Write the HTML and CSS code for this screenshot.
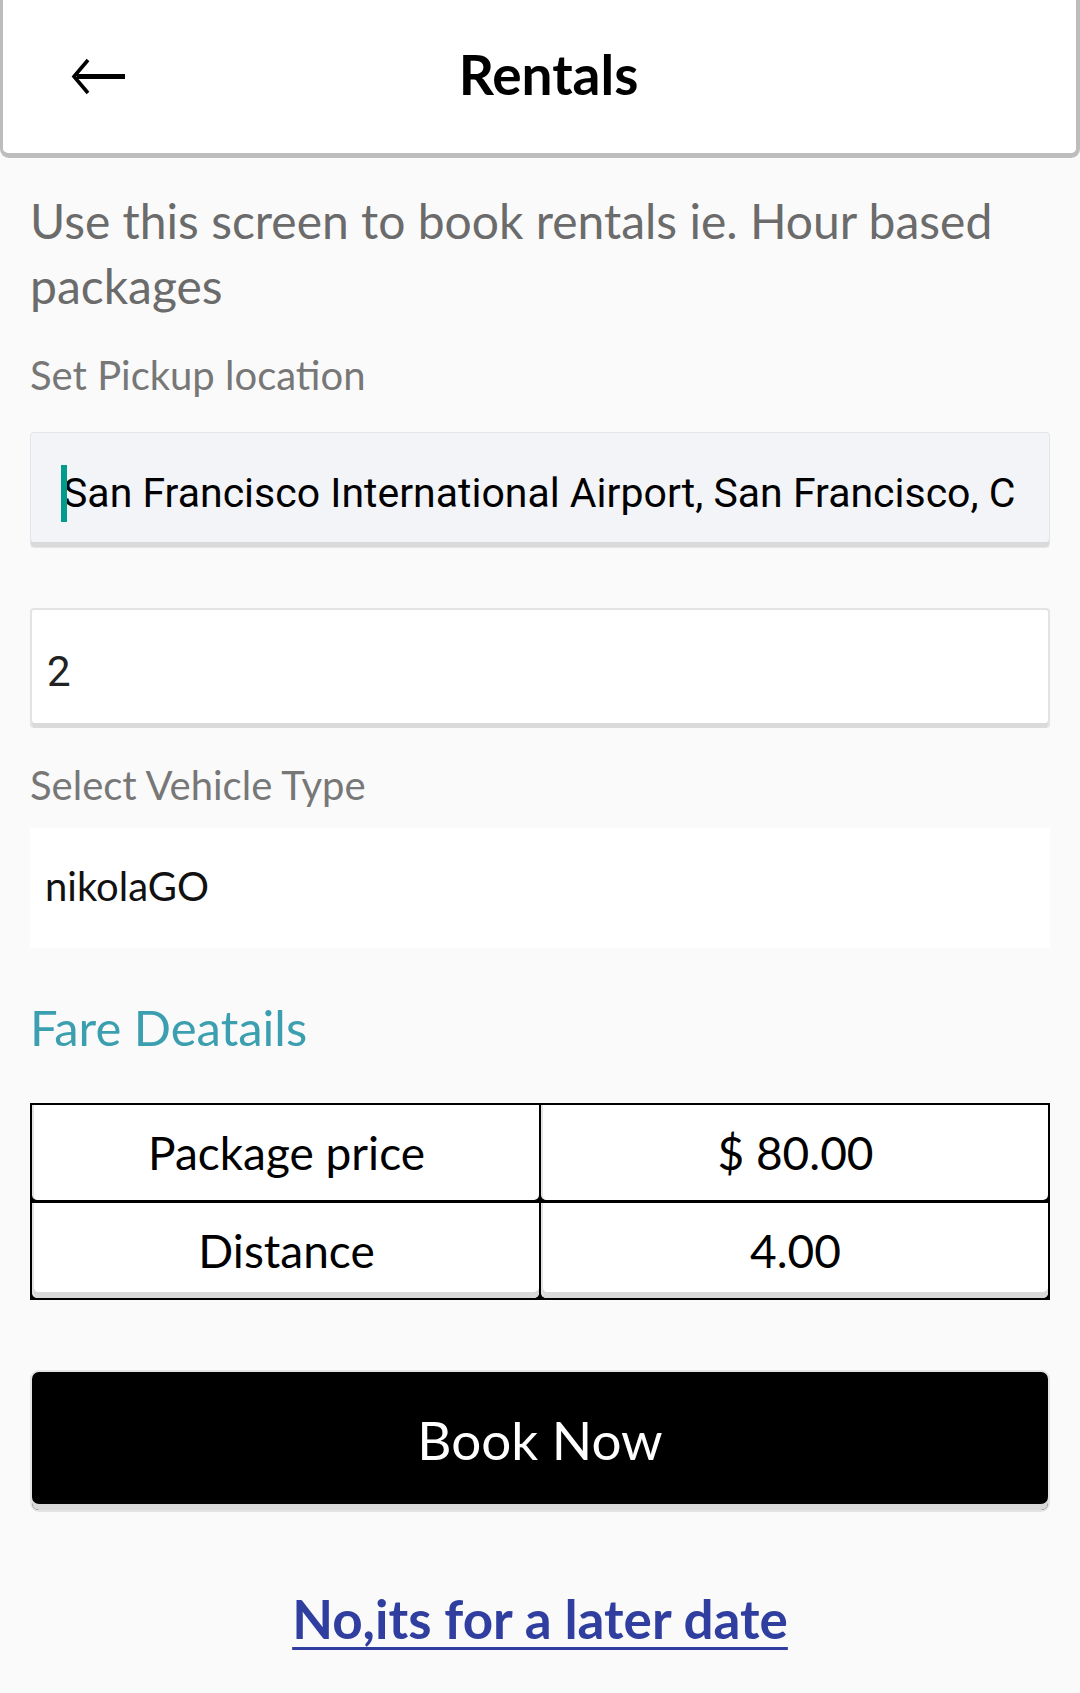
FILE: index.html
```html
<!DOCTYPE html>
<html lang="en">
<head>
<meta charset="utf-8">
<title>Rentals</title>
<link rel="stylesheet" href="styles.css">
</head>
<body>
<header class="appbar">
  <button class="back" aria-label="Back">
    <svg width="56" height="38" viewBox="0 0 56 38">
      <rect x="6" y="16" width="48" height="5" fill="#000"/>
      <polyline points="17,2 3,18.5 17,35" fill="none" stroke="#000" stroke-width="3.6" stroke-linejoin="miter"/>
    </svg>
  </button>
  <h1 class="title">Rentals</h1>
  <span class="spacer"></span>
</header>

<main class="content">
  <p class="intro">Use this screen to book rentals ie. Hour based packages</p>

  <div class="label">Set Pickup location</div>
  <div class="field field-address"><span class="cursor"></span><span class="value">San Francisco International Airport, San Francisco, C</span></div>

  <div class="field field-hours">2</div>

  <div class="label label-vehicle">Select Vehicle Type</div>
  <div class="select">nikolaGO</div>

  <h2 class="fare-title">Fare Deatails</h2>

  <div class="fare-table">
    <div class="row">
      <div class="cell">Package price</div>
      <div class="cell">$ 80.00</div>
    </div>
    <div class="row">
      <div class="cell">Distance</div>
      <div class="cell">4.00</div>
    </div>
  </div>

  <button class="book">Book Now</button>

  <div class="later-wrap"><a class="later" href="#">No,its for a later date</a></div>
</main>
</body>
</html>
```

FILE: styles.css
```css
html, body {
  margin: 0;
  padding: 0;
}
body {
  width: 1080px;
  min-height: 1693px;
  background: #fafafa;
  font-family: Lato, "Liberation Sans", sans-serif;
  color: #000;
}

.appbar {
  box-sizing: border-box;
  height: 158px;
  background: #fff;
  border: 3px solid #bdbdbd;
  border-top: 0;
  border-right-width: 4px;
  border-bottom-width: 5px;
  border-radius: 0 0 9px 9px;
  display: grid;
  grid-template-columns: 1fr auto 1fr;
  align-items: center;
}
.back {
  justify-self: start;
  margin-left: 68px;
  padding: 0;
  border: 0;
  background: none;
  display: flex;
  margin-top: 1px;
}
.title {
  margin: 0 0 6px;
  padding-left: 18px;
  font-size: 55px;
  font-weight: 700;
  line-height: 60px;
}

.content {
  padding: 0 30px;
}

.intro {
  margin: 30px 0 0;
  font-size: 48px;
  line-height: 65px;
  color: #6b6b6b;
}

.label {
  margin-top: 32px;
  font-size: 40px;
  line-height: 50px;
  color: #777;
}
.label-vehicle {
  margin-top: 32px;
}

.field {
  box-sizing: border-box;
  font-family: Roboto, "Liberation Sans", sans-serif;
  font-size: 42px;
  white-space: nowrap;
  overflow: hidden;
  display: flex;
  align-items: center;
  border-radius: 4px;
}
.field-address {
  margin-top: 32px;
  height: 116px;
  padding: 6px 14px 0 30px;
  background: #f3f4f8;
  border: 1px solid #e4e5ea;
  box-shadow: inset 0 -5px 0 #dadada;
  color: #000;
  font-size: 41px;
}
.cursor {
  display: inline-block;
  flex: none;
  width: 6px;
  height: 57px;
  background: #009b8a;
  margin-right: -4px;
  position: relative;
  z-index: 1;
}
.field-hours {
  margin-top: 60px;
  height: 120px;
  padding: 4px 15px 0;
  background: #fff;
  border: 2px solid #e3e3e3;
  border-bottom: 0;
  box-shadow: inset 0 -5px 0 #dadada;
  color: #222;
}

.select {
  box-sizing: border-box;
  margin-top: 18px;
  height: 120px;
  padding: 0 15px 4px;
  background: #fff;
  display: flex;
  align-items: center;
  font-size: 40px;
  color: #111;
}

.fare-title {
  margin: 49px 0 0;
  font-size: 49px;
  line-height: 60px;
  font-weight: 400;
  color: #3c9fb0;
}

.fare-table {
  margin-top: 46px;
  border: 2px solid #000;
  display: flex;
  flex-direction: column;
  gap: 3px;
  background: #000;
}
.row {
  display: grid;
  grid-template-columns: 1fr 1fr;
  gap: 2px;
  height: 95px;
}
.cell {
  display: flex;
  align-items: center;
  justify-content: center;
  background: #fff;
  border-left: 2px solid #e2e2e2;
  border-radius: 0 0 5px 5px;
  box-shadow: inset 0 -6px 0 #d9d9d9;
  font-size: 46px;
  color: #000;
}
.row:first-child .cell {
  box-shadow: none;
}

.book {
  display: block;
  box-sizing: border-box;
  width: 1016px;
  margin: 72px 2px 0;
  height: 138px;
  padding: 0 0 4px;
  border: 0;
  border-radius: 7px;
  background: #000;
  box-shadow: inset 0 -6px 0 #d9d9d9, 0 0 0 2px #e4e4e4;
  color: #fff;
  font-family: Lato, "Liberation Sans", sans-serif;
  font-size: 53px;
  font-weight: 400;
}

.later-wrap {
  margin-top: 79px;
  text-align: center;
  line-height: 60px;
}
.later {
  font-size: 53px;
  font-weight: 700;
  color: #303f9f;
  text-decoration: underline;
  text-decoration-thickness: 3px;
  text-underline-offset: 8px;
}
```
